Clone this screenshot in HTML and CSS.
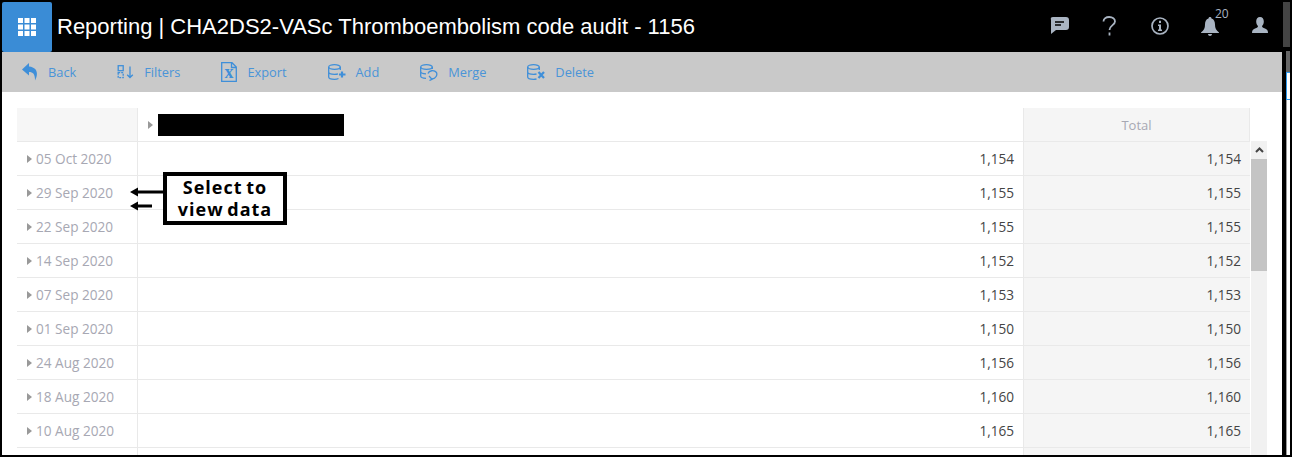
FILE: index.html
```html
<!DOCTYPE html>
<html lang="en">

<head>
    <meta charset="UTF-8">
    <title>Reporting | CHA2DS2-VASc Thromboembolism code audit - 1156</title>
    <link rel="stylesheet" href="styles.css">
</head>

<body>
    <div class="app">
        <header class="topbar">
            <button class="apps-btn" aria-label="Apps">
                <svg width="18" height="18" viewBox="0 0 18 18" fill="#fff">
                    <rect x="0" y="0" width="5" height="5"/><rect x="6.5" y="0" width="5" height="5"/><rect x="13" y="0" width="5" height="5"/>
                    <rect x="0" y="6.5" width="5" height="5"/><rect x="6.5" y="6.5" width="5" height="5"/><rect x="13" y="6.5" width="5" height="5"/>
                    <rect x="0" y="13" width="5" height="5"/><rect x="6.5" y="13" width="5" height="5"/><rect x="13" y="13" width="5" height="5"/>
                </svg>
            </button>
            <h1 class="page-title">Reporting | CHA2DS2-VASc Thromboembolism code audit - 1156</h1>
            <div class="top-icons">
                <svg class="top-icon chat" width="19" height="17" viewBox="0 0 19 17">
                    <path d="M3 0H16Q19 0 19 3V10Q19 13 16 13H6L1 17V3Q0 0 3 0Z" fill="#a9b4c2"/>
                    <path d="M5 5H14M5 8H11" stroke="#000" stroke-width="1.4"/>
                </svg>
                <svg class="top-icon help" width="15" height="20" viewBox="0 0 15 20" fill="none" stroke="#a9b4c2" stroke-width="1.8">
                    <path d="M1.5 5.5C1.5 2.8 4 1 7.200 1C10.500 1 13 3 13 5.600C13 9 7.500 9.500 7.500 14"/>
                    <path d="M7.500 16.500V19.500"/>
                </svg>
                <svg class="top-icon info" width="18" height="18" viewBox="0 0 18 18">
                    <circle cx="9" cy="9" r="8" fill="none" stroke="#a9b4c2" stroke-width="1.7"/>
                    <path d="M7 7.500H10V12.500H11V14H7V12.500H8V9H7ZM8 3.800H10V6H8Z" fill="#a9b4c2"/>
                </svg>
                <div class="bell-wrap">
                    <svg width="18" height="19" viewBox="0 0 18 19">
                        <path d="M9 0C10 0 10.500 .7 10.500 1.500C13 2.300 14 4.500 14 7.500C14 11 15 13 18 15.500V16H0V15.500C3 13 4 11 4 7.500C4 4.500 5 2.300 7.500 1.500C7.500 .7 8 0 9 0ZM7 17H11C11 18.200 10 19 9 19C8 19 7 18.200 7 17Z" fill="#a9b4c2"/>
                    </svg>
                    <span class="bell-count">20</span>
                </div>
                <svg class="top-icon user" width="16" height="16" viewBox="0 0 16 16">
                    <path d="M8 0C10.500 0 11.800 2 11.800 4.500C11.800 6.500 11 8 10 9C10 10.300 11 10.800 13 11.500C15 12.200 16 13.500 16 16H0C0 13.500 1 12.200 3 11.500C5 10.800 6 10.300 6 9C5 8 4.200 6.500 4.200 4.500C4.200 2 5.500 0 8 0Z" fill="#a9b4c2"/>
                </svg>
            </div>
        </header>

        <nav class="toolbar">
            <a class="tool" href="#back">
                <svg width="16" height="18" viewBox="0 0 16 18"><path d="M7 0L0 6.500L7 12.500V9C11 9 13 11 13 17.500C16 12 16.500 4.500 7 3.500Z" fill="#3f8fd9"/></svg>
                Back
            </a>
            <a class="tool" href="#filters">
                <svg width="17" height="14" viewBox="0 0 17 14" fill="none" stroke="#3f8fd9" stroke-width="1.300">
                    <rect x="1.200" y=".7" width="5" height="5"/>
                    <rect x="1.200" y="7.700" width="5" height="5" stroke-dasharray="2 1"/>
                    <path d="M13 1.500V12.500M10.200 9.700L13 12.500L15.800 9.700"/>
                </svg>
                Filters
            </a>
            <a class="tool" href="#export">
                <svg width="16" height="20" viewBox="0 0 16 20">
                    <path d="M.7 .7H11L15.300 5V19.300H.7ZM10.500 .7V5.500H15.300" fill="none" stroke="#3f8fd9" stroke-width="1.300"/>
                    <text class="icon-x" x="8" y="16" text-anchor="middle">x</text>
                </svg>
                Export
            </a>
            <a class="tool" href="#add">
                <svg width="18" height="16" viewBox="0 0 18 16" fill="none" stroke="#3f8fd9" stroke-width="1.300">
                    <ellipse cx="6.500" cy="3" rx="5.800" ry="2.300"/>
                    <path d="M.7 3V13C.7 14.300 3.500 15.300 6.500 15.300C8 15.300 9.500 15 10.500 14.500M.7 8C.7 9.300 3.500 10.300 6.500 10.300C8 10.300 9 10.200 10 9.800M12.300 3V6"/>
                    <path d="M14 7.500V13.500M11 10.500H17.500" stroke-width="2.200"/>
                </svg>
                Add
            </a>
            <a class="tool" href="#merge">
                <svg width="18" height="17" viewBox="0 0 18 17" fill="none" stroke="#3f8fd9" stroke-width="1.300">
                    <ellipse cx="6.500" cy="3" rx="5.800" ry="2.300"/>
                    <path d="M.7 3V12C.7 13.300 3 14.200 6 14.300M.7 7.500C.7 8.800 3 9.700 6 9.800M12.300 3V5"/>
                    <path d="M8 9.500C9 6.500 14 5.500 16.500 8.500C17.500 11 16 14.500 12 15M9 12L12 15.200L9.500 16.500"/>
                </svg>
                Merge
            </a>
            <a class="tool" href="#delete">
                <svg width="18" height="16" viewBox="0 0 18 16" fill="none" stroke="#3f8fd9" stroke-width="1.300">
                    <ellipse cx="6.500" cy="3" rx="5.800" ry="2.300"/>
                    <path d="M.7 3V13C.7 14.300 3.500 15.300 6.500 15.300C7.500 15.300 8.500 15.200 9.500 15M.7 8C.7 9.300 3.500 10.300 6.500 10.300C7.500 10.300 8.500 10.200 9.500 10M12.300 3V6"/>
                    <path d="M11.500 8L17 14M17 8L11.500 14" stroke-width="2.200"/>
                </svg>
                Delete
            </a>
        </nav>

        <main class="content">
            <div class="report">
                <div class="report-table">
                    <div class="row head-row">
                        <div class="cell date-cell blank"></div>
                        <div class="cell group-head"><span class="caret"></span><span class="redacted"></span></div>
                        <div class="cell total-cell total-head">Total</div>
                    </div>
                    <div class="row"><div class="cell date-cell"><span class="caret"></span>05 Oct 2020</div><div class="cell num-cell">1,154</div><div class="cell total-cell">1,154</div></div>
                    <div class="row"><div class="cell date-cell"><span class="caret"></span>29 Sep 2020</div><div class="cell num-cell">1,155</div><div class="cell total-cell">1,155</div></div>
                    <div class="row"><div class="cell date-cell"><span class="caret"></span>22 Sep 2020</div><div class="cell num-cell">1,155</div><div class="cell total-cell">1,155</div></div>
                    <div class="row"><div class="cell date-cell"><span class="caret"></span>14 Sep 2020</div><div class="cell num-cell">1,152</div><div class="cell total-cell">1,152</div></div>
                    <div class="row"><div class="cell date-cell"><span class="caret"></span>07 Sep 2020</div><div class="cell num-cell">1,153</div><div class="cell total-cell">1,153</div></div>
                    <div class="row"><div class="cell date-cell"><span class="caret"></span>01 Sep 2020</div><div class="cell num-cell">1,150</div><div class="cell total-cell">1,150</div></div>
                    <div class="row"><div class="cell date-cell"><span class="caret"></span>24 Aug 2020</div><div class="cell num-cell">1,156</div><div class="cell total-cell">1,156</div></div>
                    <div class="row"><div class="cell date-cell"><span class="caret"></span>18 Aug 2020</div><div class="cell num-cell">1,160</div><div class="cell total-cell">1,160</div></div>
                    <div class="row"><div class="cell date-cell"><span class="caret"></span>10 Aug 2020</div><div class="cell num-cell">1,165</div><div class="cell total-cell">1,165</div></div>
                    <div class="row"><div class="cell date-cell"></div><div class="cell num-cell"></div><div class="cell total-cell"></div></div>
                </div>
                <div class="scrollbar">
                    <div class="scroll-up">
                        <svg width="9" height="6" viewBox="0 0 9 6"><path d="M1 5L4.500 1.500L8 5" fill="none" stroke="#444" stroke-width="2"/></svg>
                    </div>
                    <div class="scroll-thumb"></div>
                </div>
            </div>

            <!-- Anotación sobre la captura -->
            <div class="callout">
                <svg class="callout-arrows" width="33" height="28" viewBox="0 0 33 28">
                    <path d="M33 7H6M22 21H6" stroke="#000" stroke-width="3"/>
                    <path d="M0 7L8 2.500V11.500ZM0 21L8 16.500V25.500Z" fill="#000"/>
                </svg>
                <div class="callout-box">Select to<br>view data</div>
            </div>
        </main>
    </div>

    <div class="edge">
        <div class="edge-top"></div>
        <div class="edge-side">
            <div class="edge-gray"></div>
            <div class="edge-blue"></div>
            <div class="edge-rest"></div>
        </div>
    </div>
</body>

</html>
```

FILE: styles.css
```css
* {
    box-sizing: border-box;
}

html,
body {
    height: 457px;
    margin: 0;
    overflow: hidden;
}

body {
    display: flex;
    padding: 0 0 2px 2px;
    background: #000;
    font-family: "Open Sans", sans-serif;
    font-size: 13.6px;
    color: #444;
}

.app {
    width: 1280px;
    display: flex;
    flex-direction: column;
}

/* Barra superior */
.topbar {
    height: 52px;
    flex: none;
    display: flex;
    align-items: flex-end;
    background: #000;
}

.apps-btn {
    width: 50px;
    height: 50px;
    padding: 0;
    border: none;
    border-radius: 2px;
    background: #3a8cd6;
    display: flex;
    align-items: center;
    justify-content: center;
}

.page-title {
    margin: 2px 0 0 5px;
    align-self: center;
    font-family: "Liberation Sans", sans-serif;
    font-size: 22px;
    font-weight: normal;
    color: #fff;
    white-space: nowrap;
}

.top-icons {
    margin-left: auto;
    height: 52px;
    display: flex;
    align-items: flex-start;
    padding: 17px 14px 0 0;
}

.top-icon {
    flex: none;
}

.chat {
    margin-right: 33px;
}

.help {
    margin-top: -1px;
    margin-right: 34px;
}

.info {
    margin-right: 32px;
}

.bell-wrap {
    position: relative;
    width: 18px;
    height: 19px;
    margin-right: 33px;
}

.bell-count {
    position: absolute;
    left: 14px;
    top: -12px;
    font-size: 12px;
    color: #a9b4c2;
}

/* Barra de acciones */
.toolbar {
    height: 40px;
    flex: none;
    display: flex;
    align-items: center;
    gap: 41px;
    padding-left: 20px;
    background: #c9c9c9;
    font-size: 12.8px;
}

.tool {
    display: flex;
    align-items: center;
    gap: 10px;
    color: #4a94d8;
    text-decoration: none;
    white-space: nowrap;
}

.icon-x {
    font-family: "Liberation Serif", serif;
    font-size: 18px;
    font-weight: bold;
    fill: #3f8fd9;
}

/* Tabla */
.content {
    position: relative;
    flex: 1;
    min-height: 0;
    overflow: hidden;
    padding: 16px 0 0 15px;
    background: #fff;
}

.report {
    display: flex;
    align-items: flex-start;
}

.report-table {
    width: 1233px;
    flex: none;
}

.row {
    display: grid;
    grid-template-columns: 121px 886px 226px;
    height: 34px;
}

.cell {
    display: flex;
    align-items: center;
    border-bottom: 1px solid #e9e9e9;
}

.date-cell {
    padding-left: 10px;
    border-right: 1px solid #e9e9e9;
    color: #a7a8b3;
}

.blank {
    background: #f6f6f6;
}

.group-head {
    padding-left: 10px;
    border-right: 1px solid #e9e9e9;
}

.num-cell {
    justify-content: flex-end;
    padding-right: 9px;
    border-right: 1px solid #e9e9e9;
}

.total-cell {
    justify-content: flex-end;
    padding-right: 9px;
    background: #f5f5f5;
}

.total-head {
    justify-content: center;
    padding: 1px 0 0;
    border-right: 1px solid #e9e9e9;
    font-size: 13px;
    color: #a7a8b3;
}

.caret {
    width: 0;
    height: 0;
    flex: none;
    margin-right: 4px;
    border-left: 5px solid #999;
    border-top: 4px solid transparent;
    border-bottom: 4px solid transparent;
}

.redacted {
    width: 186px;
    height: 22px;
    margin-left: 1px;
    background: #000;
}

.scrollbar {
    width: 16px;
    height: 314px;
    flex: none;
    margin: 33px 0 0 1px;
    background: #f1f1f1;
}

.scroll-up {
    height: 18px;
    display: flex;
    align-items: center;
    justify-content: center;
}

.scroll-thumb {
    height: 112px;
    background: #c4c4c4;
}

/* Nota */
.callout {
    position: absolute;
    left: 128px;
    top: 80px;
    display: flex;
    align-items: flex-start;
}

.callout-arrows {
    margin-top: 13px;
}

.callout-box {
    width: 124px;
    height: 53px;
    border: 4px solid #000;
    background: #fff;
    font-family: "Open Sans", sans-serif;
    font-size: 18px;
    font-weight: bold;
    letter-spacing: 1px;
    word-spacing: -2px;
    line-height: 22px;
    text-align: center;
    color: #000;
}

/* Borde derecho de la captura */
.edge {
    width: 10px;
    flex: none;
    display: flex;
    flex-direction: column;
}

.edge-top {
    height: 45px;
    flex: none;
    margin: 2px 2px 4px 1px;
    background: #444;
}

.edge-side {
    flex: 1;
    display: flex;
    flex-direction: column;
    margin: 0 2px 0 4px;
}

.edge-gray {
    height: 21px;
    background: #666;
}

.edge-blue {
    height: 28px;
    border: 1px solid #2f9bef;
    border-right: none;
    background: #fff;
}

.edge-rest {
    flex: 1;
    border-left: 1px solid #999;
    background: #fff;
}
```
